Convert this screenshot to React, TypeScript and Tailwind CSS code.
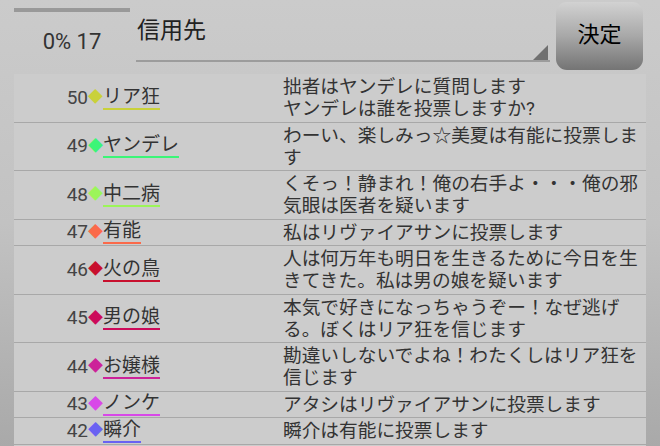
import React from "react";

type Row = { no: number; name: string; color: string; text: string };

const rows: Row[] = [
  { no: 50, name: "リア狂", color: "#c9d13a", text: "拙者はヤンデレに質問します\nヤンデレは誰を投票しますか?" },
  { no: 49, name: "ヤンデレ", color: "#3cf577", text: "わーい、楽しみっ☆美夏は有能に投票します" },
  { no: 48, name: "中二病", color: "#9cf559", text: "くそっ！静まれ！俺の右手よ・・・俺の邪気眼は医者を疑います" },
  { no: 47, name: "有能", color: "#fb6a4a", text: "私はリヴァイアサンに投票します" },
  { no: 46, name: "火の鳥", color: "#c8102e", text: "人は何万年も明日を生きるために今日を生きてきた。私は男の娘を疑います" },
  { no: 45, name: "男の娘", color: "#cc0a5a", text: "本気で好きになっちゃうぞー！なぜ逃げる。ぼくはリア狂を信じます" },
  { no: 44, name: "お嬢様", color: "#cc2299", text: "勘違いしないでよね！わたくしはリア狂を信じます" },
  { no: 43, name: "ノンケ", color: "#d848e8", text: "アタシはリヴァイアサンに投票します" },
  { no: 42, name: "瞬介", color: "#6a62f2", text: "瞬介は有能に投票します" },
];

const font = { fontFamily: 'Roboto, "Noto Sans CJK JP", sans-serif' };

const App = () => (
  <div
    className="w-[660px] h-[446px] overflow-hidden bg-gradient-to-b from-[#cbcbcb] via-[#c2c2c2] to-[#a9a9a9] text-[#333]"
    style={font}
  >
    <header className="h-[74px] flex">
      <div className="ml-[14px] w-[116px] flex flex-col">
        <div className="mt-[8px] h-[4px] bg-[#999999]" />
        <div className="flex-1 flex items-center justify-center pb-[4px] text-[22px] text-[#333]">0% 17</div>
      </div>
      <div className="relative ml-[6px] w-[414px] h-[62px] border-b-2 border-[#9c9c9c]">
        <span className="absolute left-[1px] top-[16px] text-[23px] leading-[30px] text-[#222]">信用先</span>
        <span className="absolute right-[2px] bottom-0 w-0 h-0 border-l-[15px] border-l-transparent border-b-[15px] border-b-[#707070]" />
      </div>
      <button className="ml-[6px] mt-[2px] w-[87px] h-[68px] rounded-[11px] bg-gradient-to-b from-[#d2d2d2] via-[#a8a8a8] to-[#747474] text-[22px] text-black flex items-center justify-center pb-[4px]">
        決定
      </button>
    </header>
    <div className="mx-[14px] w-[632px] bg-[#cccccc]">
      {rows.map((r) => (
        <div key={r.no} className="flex border-b border-[#a8a8a8]">
          <div className="w-[269px] flex items-center pl-[48px]">
            <span className="w-[26px] text-right text-[19px] leading-[22px] text-[#444]">{r.no}</span>
            <span className="text-[15px] leading-none" style={{ color: r.color }}>◆</span>
            <span
              className="text-[19px] leading-[22px] text-[#333] border-b-2"
              style={{ borderColor: r.color }}
            >
              {r.name}
            </span>
          </div>
          <div className="w-[360px] pt-[2px] pb-[1.5px] text-[18.7px] leading-[22px] text-[#333] whitespace-pre-line break-all">
            {r.text}
          </div>
        </div>
      ))}
      <div className="h-[20px]" />
    </div>
  </div>
);

export default App;
